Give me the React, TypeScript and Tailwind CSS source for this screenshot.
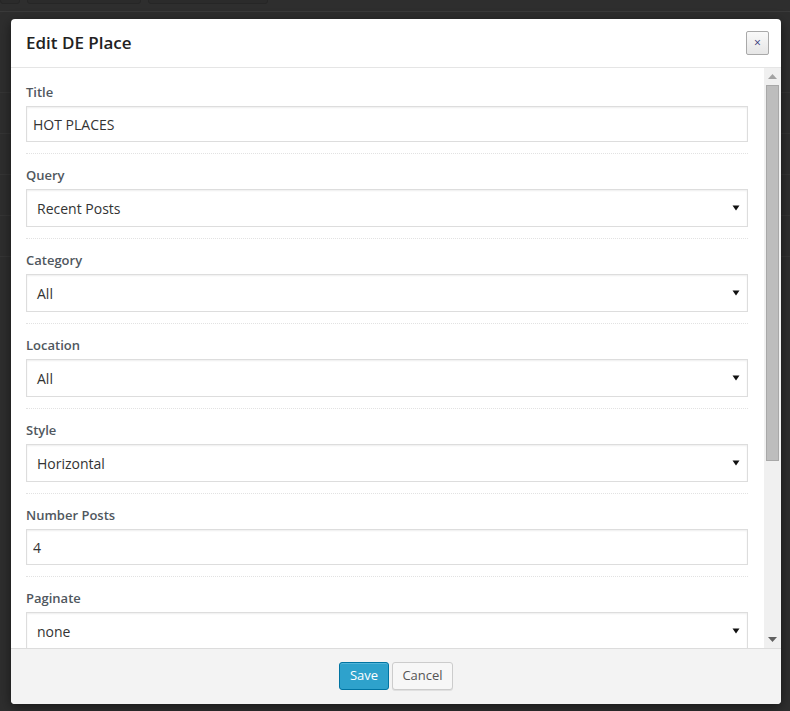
import { useState } from "react";

const font = { fontFamily: '"Open Sans", "Liberation Sans", sans-serif' };

type Field = { label: string; value: string; kind: "text" | "select" };

const fields: Field[] = [
  { label: "Title", value: "HOT PLACES", kind: "text" },
  { label: "Query", value: "Recent Posts", kind: "select" },
  { label: "Category", value: "All", kind: "select" },
  { label: "Location", value: "All", kind: "select" },
  { label: "Style", value: "Horizontal", kind: "select" },
  { label: "Number Posts", value: "4", kind: "text" },
  { label: "Paginate", value: "none", kind: "select" },
];

function Arrow() {
  return (
    <svg width="8" height="6" viewBox="0 0 8 6" className="shrink-0">
      <path d="M0.5 0.5 H7.5 L4 5.5 Z" fill="#111" />
    </svg>
  );
}

function FieldRow({ f, last }: { f: Field; last: boolean }) {
  const [val, setVal] = useState(f.value);
  return (
    <div className="flex flex-col">
      <label className="h-[20px] leading-[20px] text-[13px] font-semibold text-[#50575e]">{f.label}</label>
      {f.kind === "text" ? (
        <input
          value={val}
          onChange={(e) => setVal(e.target.value)}
          className="mt-[4px] h-[36px] w-full border border-[#ddd] bg-white px-[6px] text-[14px] text-[#333] shadow-[inset_0_1px_2px_rgba(0,0,0,0.07)] outline-none"
          style={font}
        />
      ) : (
        <div className="mt-[4px] flex h-[38px] w-full shrink-0 items-center justify-between border border-[#ddd] bg-white pl-[10px] pr-[7px] text-[14px] text-[#333] shadow-[inset_0_1px_2px_rgba(0,0,0,0.07)]">
          <span>{val}</span>
          <Arrow />
        </div>
      )}
      {!last && <div className="my-[11px] border-t border-dotted border-[#e2e2e2]" />}
    </div>
  );
}

function Scrollbar() {
  return (
    <div className="flex w-[17px] shrink-0 flex-col items-center bg-[#f0f0f0]">
      <div className="flex h-[17px] items-center justify-center">
        <svg width="9" height="5" viewBox="0 0 9 5">
          <path d="M0 5 L4.5 0 L9 5 Z" fill="#a3a3a3" />
        </svg>
      </div>
      <div className="h-[376px] w-[13px] border border-[#a8a8a8] bg-[#bdbdbd]" />
      <div className="flex-1" />
      <div className="flex h-[17px] items-center justify-center">
        <svg width="9" height="5" viewBox="0 0 9 5">
          <path d="M0 0 L9 0 L4.5 5 Z" fill="#606060" />
        </svg>
      </div>
    </div>
  );
}

export default function App() {
  return (
    <div className="relative h-[711px] w-[790px] overflow-hidden bg-[#2e2e2e]" style={font}>
      {/* page behind the overlay */}
      <div className="flex gap-[7px] border-b border-[#3a3a3a] pb-[7px]">
        <div className="-mt-[2px] h-[6px] w-[20px] rounded-b-[3px] border border-[#262626] bg-[#2b2b2b]" />
        <div className="-mt-[2px] h-[6px] w-[114px] rounded-b-[3px] border border-[#262626] bg-[#2b2b2b]" />
        <div className="-mt-[2px] h-[6px] w-[120px] rounded-b-[3px] border border-[#262626] bg-[#2b2b2b]" />
      </div>
      <div className="flex flex-col gap-[40px] pt-[80px]">
        <div className="border-t border-[#353535]" />
        <div className="border-t border-[#353535]" />
        <div className="border-t border-[#353535]" />
        <div className="border-t border-[#353535]" />
        <div className="border-t border-[#353535]" />
      </div>

      {/* modal */}
      <div className="absolute left-[11px] top-[19px] flex h-[685px] w-[770px] flex-col overflow-hidden rounded-[4px] bg-white shadow-[0_3px_12px_rgba(0,0,0,0.5)]">
        <div className="flex h-[49px] shrink-0 items-center justify-between border-b border-[#e5e5e5] pl-[15px] pr-[12px]">
          <h1 className="text-[17px] font-semibold text-[#222]">Edit DE Place</h1>
          <button className="mb-[1px] flex h-[24px] w-[23px] items-center justify-center rounded-[2px] border border-[#a9a9a9] bg-gradient-to-b from-[#f9f9f9] to-[#e6e6e6] text-[12px] leading-none text-[#33337a]">
            ×
          </button>
        </div>

        <div className="flex min-h-0 flex-1">
          <div className="flex-1 overflow-hidden pl-[15px] pr-[16px] pt-[14px]">
            {fields.map((f, i) => (
              <FieldRow key={f.label} f={f} last={i === fields.length - 1} />
            ))}
          </div>
          <Scrollbar />
        </div>

        <div className="flex h-[56px] shrink-0 items-start justify-center gap-[3px] border-t border-[#dcdcdc] bg-[#f3f3f3] pt-[13px]">
          <button className="h-[28px] w-[50px] rounded-[3px] border border-[#0074a2] bg-[#2ea2cc] text-[13px] text-white shadow-[inset_0_1px_0_rgba(120,200,230,0.5)]">
            Save
          </button>
          <button className="h-[28px] w-[61px] rounded-[3px] border border-[#cccccc] bg-[#f7f7f7] text-[13px] text-[#555] shadow-[0_1px_0_rgba(0,0,0,0.08)]">
            Cancel
          </button>
        </div>
      </div>
    </div>
  );
}
